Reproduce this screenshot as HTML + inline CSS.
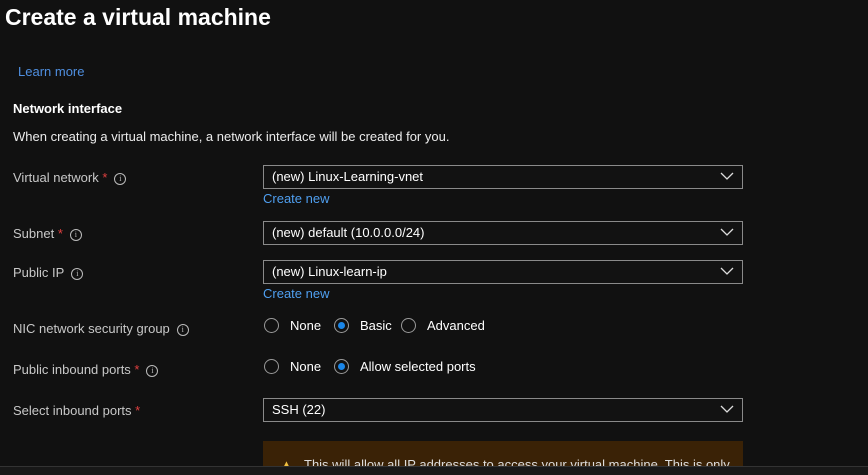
<!DOCTYPE html>
<html style="overflow:hidden;height:475px"><head><style>
html,body{margin:0;width:868px;height:475px;overflow:hidden}
body{background:#111111;font-family:"Segoe UI","Liberation Sans",sans-serif;color:#fff;position:relative;font-size:13px}
.a{position:absolute;white-space:nowrap}
.lbl{color:#c8c8c8;font-size:13px}
.star{color:#e04040}
.info{display:inline-block;width:10px;height:10px;border:1px solid #bbb;border-radius:50%;font-size:8px;line-height:10px;text-align:center;color:#bbb;vertical-align:1px;margin-left:7px;font-family:"Liberation Serif",serif}
.sel{position:absolute;left:263px;width:478px;height:22px;border:1px solid #8a8a8a;background:#121212}
.sel span{position:absolute;left:8px;top:3px;font-size:13px}
.sel svg{position:absolute;right:8px;top:6px}
.link{color:#4f9ff0;font-size:13px}
.r{position:absolute;width:15px;height:15px;border:1px solid #9a9a9a;border-radius:50%;box-sizing:border-box}
.r.on::after{content:"";position:absolute;left:3px;top:3px;width:7px;height:7px;border-radius:50%;background:#1a86e8}
</style></head><body>
<div class="a" style="left:5px;top:4px;font-size:23px;font-weight:600;color:#fff">Create a virtual machine</div>
<div class="a link" style="left:18px;top:64px;color:#4f8fe0">Learn more</div>
<div class="a" style="left:13px;top:101px;font-weight:700;font-size:13px">Network interface</div>
<div class="a" style="left:13px;top:129px;color:#ececec">When creating a virtual machine, a network interface will be created for you.</div>

<div class="a lbl" style="left:13px;top:170px">Virtual network <span class="star">*</span><span class="info">i</span></div>
<div class="sel" style="top:165px"><span>(new) Linux-Learning-vnet</span><svg width="14" height="9"><path d="M1 1l6 6 6-6" stroke="#ddd" fill="none" stroke-width="1.3"/></svg></div>
<div class="a link" style="left:263px;top:191px">Create new</div>

<div class="a lbl" style="left:13px;top:226px">Subnet <span class="star">*</span><span class="info">i</span></div>
<div class="sel" style="top:221px"><span>(new) default (10.0.0.0/24)</span><svg width="14" height="9"><path d="M1 1l6 6 6-6" stroke="#ddd" fill="none" stroke-width="1.3"/></svg></div>

<div class="a lbl" style="left:13px;top:265px">Public IP<span class="info">i</span></div>
<div class="sel" style="top:260px"><span>(new) Linux-learn-ip</span><svg width="14" height="9"><path d="M1 1l6 6 6-6" stroke="#ddd" fill="none" stroke-width="1.3"/></svg></div>
<div class="a link" style="left:263px;top:286px">Create new</div>

<div class="a lbl" style="left:13px;top:321px">NIC network security group<span class="info">i</span></div>
<div class="r" style="left:264px;top:318px"></div><div class="a" style="left:290px;top:318px">None</div>
<div class="r on" style="left:334px;top:318px"></div><div class="a" style="left:360px;top:318px">Basic</div>
<div class="r" style="left:401px;top:318px"></div><div class="a" style="left:427px;top:318px">Advanced</div>

<div class="a lbl" style="left:13px;top:362px">Public inbound ports <span class="star">*</span><span class="info">i</span></div>
<div class="r" style="left:264px;top:359px"></div><div class="a" style="left:290px;top:359px">None</div>
<div class="r on" style="left:334px;top:359px"></div><div class="a" style="left:360px;top:359px">Allow selected ports</div>

<div class="a lbl" style="left:13px;top:403px">Select inbound ports <span class="star">*</span></div>
<div class="sel" style="top:398px"><span>SSH (22)</span><svg width="14" height="9"><path d="M1 1l6 6 6-6" stroke="#ddd" fill="none" stroke-width="1.3"/></svg></div>

<div class="a" style="left:263px;top:441px;width:480px;height:25px;background:#3a2206"></div>
<div class="a" style="left:280px;top:457px;color:#f0c040;font-size:13px">▲</div>
<div class="a" style="left:304px;top:457px;color:#ddd">This will allow all IP addresses to access your virtual machine.  This is only</div>
<div class="a" style="left:0;top:466px;width:868px;height:9px;background:#181818;border-top:1px solid #333"></div>
</body></html>
